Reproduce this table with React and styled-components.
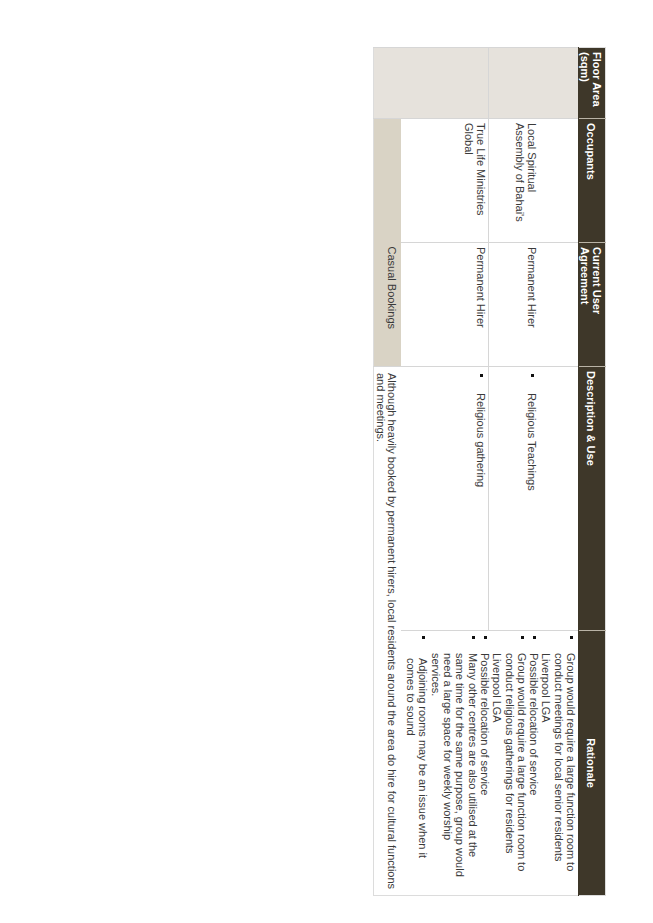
import React from 'react';
import styled, { createGlobalStyle } from 'styled-components';

const GlobalStyle = createGlobalStyle`
  html, body { margin: 0; padding: 0; background: #ffffff; overflow: hidden; }
  body { font-family: "Liberation Sans", Arial, sans-serif; }
`;

const Page = styled.div`
  width: 653px;
  height: 923px;
  overflow: hidden;
  background: #ffffff;
`;

/* The document page is printed in landscape and shown turned a quarter clockwise */
const LandscapeSheet = styled.div`
  width: 848px;
  transform-origin: 0 0;
  transform: translate(606px, 47px) rotate(90deg);
`;

const Table = styled.table`
  width: 848px;
  border-collapse: collapse;
  table-layout: fixed;
  font-size: 11px;
  line-height: 12.3px;
  color: #3a3a3a;
  border: 1px solid #dcdcdc;
`;

const HeadRow = styled.tr`
  height: 26px;
`;

const BodyRow = styled.tr`
  height: ${p => p.$h}px;
`;

const Th = styled.th`
  background: #3e3729;
  color: #ffffff;
  font-weight: bold;
  font-size: 11px;
  line-height: 11.5px;
  text-align: ${p => (p.$center ? 'center' : 'left')};
  vertical-align: middle;
  padding: 3px 4px 0 4px;
  border-left: 1px solid #b9b3a6;
  border-bottom: 1px solid #3e3729;
  &:first-child { border-left: none; }
`;

const Td = styled.td`
  vertical-align: top;
  background: ${p => p.$bg || '#ffffff'};
  padding: ${p => p.$pt ?? 1}px ${p => p.$pr ?? 5}px 0 ${p => p.$pl ?? 4}px;
  border-left: ${p => (p.$noLeft ? 'none' : '1px solid #d6d6d6')};
  border-top: ${p => (p.$noTop ? 'none' : '1px solid #d6d6d6')};
  border-bottom: none;
  line-height: ${p => p.$lh ?? 12.3}px;
`;

const Bullets = styled.ul`
  list-style: none;
  margin: 0;
  padding: 0;
`;

const Item = styled.li`
  position: relative;
  padding-left: ${p => p.$indent}px;
  &::before {
    content: '';
    position: absolute;
    left: ${p => p.$dot}px;
    top: 4px;
    width: 3px;
    height: 3px;
    background: #111111;
  }
`;

const FLOOR_BG = '#e6e2dc';
const CASUAL_BG = '#d9d3c5';

const rationale = [
  { text: 'Group would require a large function room to conduct meetings for local senior residents Liverpool LGA' },
  { text: 'Possible relocation of service' },
  { text: 'Group would require a large function room to conduct religious gatherings for residents Liverpool LGA' },
  { text: 'Possible relocation of service' },
  { text: 'Many other centres are also utilised at the same time for the same purpose, group would need a large space for weekly worship services.' },
  { text: 'Adjoining rooms may be an issue when it comes to sound', extra: 5 },
];

export default function App() {
  return (
    <Page>
      <GlobalStyle />
      <LandscapeSheet>
        <Table>
          <colgroup>
            <col style={{ width: 71 }} />
            <col style={{ width: 124 }} />
            <col style={{ width: 124 }} />
            <col style={{ width: 264 }} />
            <col style={{ width: 265 }} />
          </colgroup>
          <thead>
            <HeadRow>
              <Th>Floor Area (sqm)</Th>
              <Th>Occupants</Th>
              <Th>Current User Agreement</Th>
              <Th>Description &amp; Use</Th>
              <Th $center>Rationale</Th>
            </HeadRow>
          </thead>
          <tbody>
            <BodyRow $h={90}>
              <Td $bg={FLOOR_BG} />
              <Td $pt={40}>Local Spiritual Assembly of Bahai's</Td>
              <Td $pt={40}>Permanent Hirer</Td>
              <Td $pt={40}>
                <Bullets>
                  <Item $indent={22} $dot={3}>Religious Teachings</Item>
                </Bullets>
              </Td>
              <Td rowSpan={2} $pr={14}>
                <Bullets>
                  {rationale.map((r, i) => (
                    <Item key={i} $indent={18 + (r.extra || 0)} $dot={1}>
                      {r.text}
                    </Item>
                  ))}
                </Bullets>
              </Td>
            </BodyRow>
            <BodyRow $h={87}>
              <Td rowSpan={2} $bg={FLOOR_BG} />
              <Td>True Life Ministries Global</Td>
              <Td>Permanent Hirer</Td>
              <Td>
                <Bullets>
                  <Item $indent={22} $dot={3}>Religious gathering</Item>
                </Bullets>
              </Td>
            </BodyRow>
            <BodyRow $h={26}>
              <Td $noTop $bg={CASUAL_BG} />
              <Td $noTop $noLeft $bg={CASUAL_BG} $pt={4} $lh={11.5}>Casual Bookings</Td>
              <Td $noTop colSpan={2} $pt={4} $pl={6} $pr={2} $lh={11.5}>
                Although heavily booked by permanent hirers, local residents around the area do hire for cultural functions and meetings.
              </Td>
            </BodyRow>
          </tbody>
        </Table>
      </LandscapeSheet>
    </Page>
  );
}
